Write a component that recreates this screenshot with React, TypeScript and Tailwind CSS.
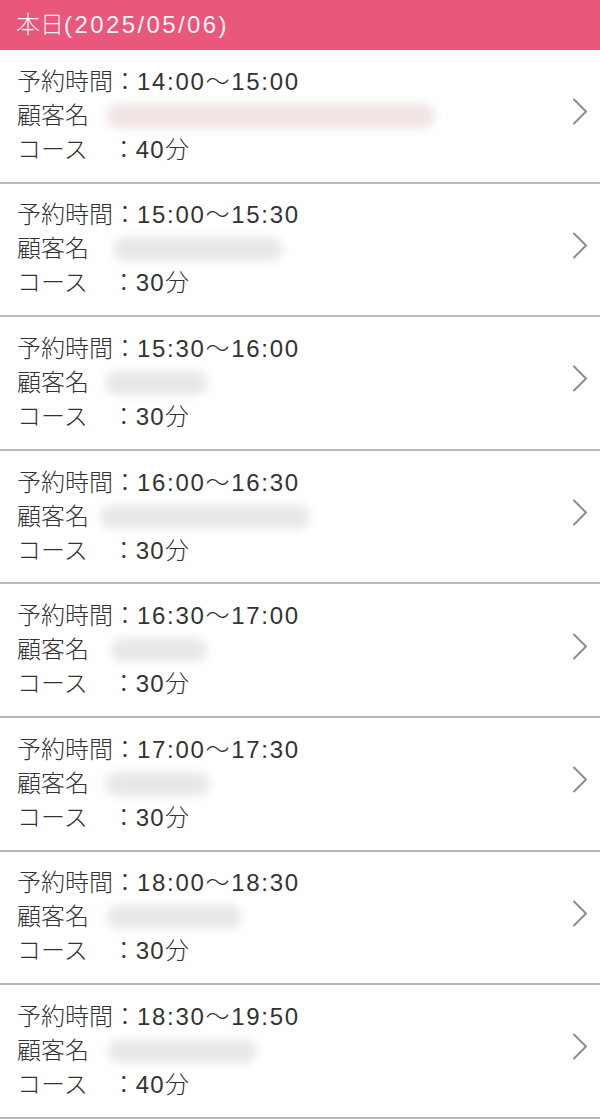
const rows = [
  { time: '14:00〜15:00', course: '40分', nameW: 328, nameX: 107, tint: 'bg-[#f1e4e4]' },
  { time: '15:00〜15:30', course: '30分', nameW: 170, nameX: 113, tint: 'bg-[#e8e8e8]' },
  { time: '15:30〜16:00', course: '30分', nameW: 103, nameX: 105, tint: 'bg-[#e8e8e8]' },
  { time: '16:00〜16:30', course: '30分', nameW: 210, nameX: 100, tint: 'bg-[#e8e8e8]' },
  { time: '16:30〜17:00', course: '30分', nameW: 97, nameX: 110, tint: 'bg-[#e8e8e8]' },
  { time: '17:00〜17:30', course: '30分', nameW: 105, nameX: 105, tint: 'bg-[#e8e8e8]' },
  { time: '18:00〜18:30', course: '30分', nameW: 135, nameX: 107, tint: 'bg-[#e8e8e8]' },
  { time: '18:30〜19:50', course: '40分', nameW: 149, nameX: 108, tint: 'bg-[#e8e8e8]' },
];

const font = "font-['Liberation_Sans','Noto_Sans_CJK_JP',sans-serif]";

function Chevron() {
  return (
    <svg width="16" height="27" viewBox="0 0 16 27" fill="none" className="-mt-[8px] shrink-0">
      <polyline points="2,1.5 14,13.5 2,25.5" stroke="#8c8c8c" strokeWidth="2" strokeLinecap="round" strokeLinejoin="round" />
    </svg>
  );
}

export default function App() {
  return (
    <div className={`w-[600px] bg-white text-[#333] font-light ${font}`}>
      <div className="h-[50px] bg-[#e9577c] flex items-center pl-[16px] text-[24px] text-white/95 leading-none">
        <span>本日</span>
        <span className="tracking-[2.4px]">(2025/05/06)</span>
      </div>
      {rows.map((r) => (
        <div key={r.time} className="h-[133.6px] border-b-2 border-[#b9b9b9] flex items-center pl-[17px] pr-[12px]">
          <div className="flex-1 text-[24px] leading-[34px]">
            <div>
              予約時間：<span className="tracking-[1.7px]">{r.time}</span>
            </div>
            <div className="relative h-[34px]">
              顧客名
              <span
                className={`absolute top-[5px] h-[24px] rounded-full blur-[5px] ${r.tint}`}
                style={{ left: r.nameX - 17, width: r.nameW }}
              />
            </div>
            <div>
              コース　：<span className="tracking-[1.2px]">{r.course}</span>
            </div>
          </div>
          <Chevron />
        </div>
      ))}
    </div>
  );
}
